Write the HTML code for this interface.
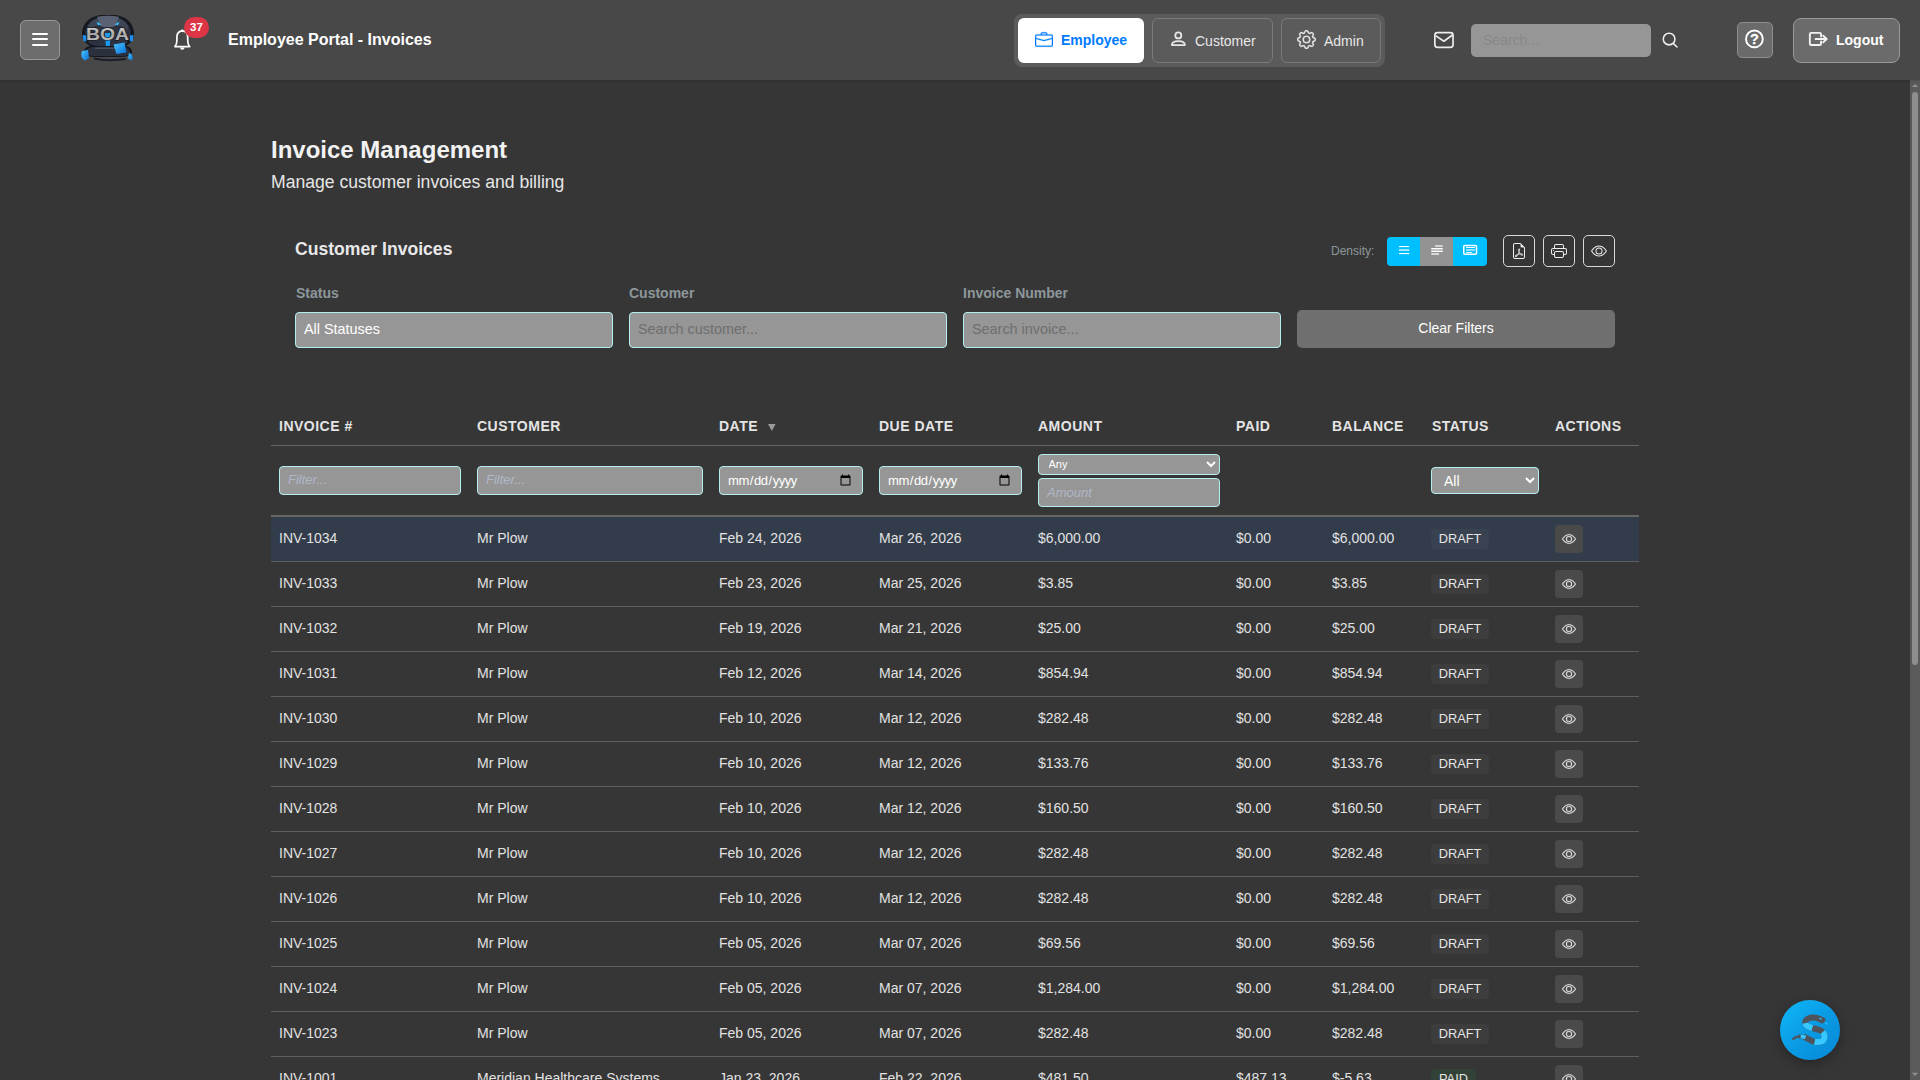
<!DOCTYPE html>
<html><head><meta charset="utf-8"><title>Employee Portal - Invoices</title>
<style>
*{box-sizing:border-box}
html,body{margin:0;padding:0}
body{width:1920px;height:1080px;overflow:hidden;position:relative;background:#363636;font-family:"Liberation Sans",sans-serif;color:#e0e0e0}
.abs{position:absolute}
svg{display:block}
/* header */
#hdr{position:absolute;left:0;top:0;width:1920px;height:80px;background:#484848;box-shadow:0 1px 3px rgba(0,0,0,.15);z-index:5}
.hb{position:absolute;left:20px;top:20px;width:40px;height:40px;background:#6d6d6d;border:1px solid #999;border-radius:6px}
.hb i{position:absolute;left:11px;width:16px;height:2px;background:#fff;border-radius:1px}
.badge37{position:absolute;left:184px;top:17px;width:25px;height:21px;border-radius:11px;background:#dc3545;color:#fff;font-size:11.5px;font-weight:700;text-align:center;line-height:21px}
.ptitle{position:absolute;left:228px;top:31px;font-size:16px;font-weight:700;color:#fff;line-height:18px;white-space:nowrap}
.navgrp{position:absolute;left:1014px;top:14px;width:371px;height:53px;background:#5b5b5b;border-radius:8px}
.nb{position:absolute;top:4px;height:45px;border-radius:6px;font-size:14px;white-space:nowrap}
.nb.act{left:4px;width:126px;background:#fff;color:#007bff;font-weight:700}
.nb.cu{left:138px;width:121px;border:1px solid #7a7a7a;color:#e8e8e8}
.nb.ad{left:267px;width:100px;border:1px solid #7a7a7a;color:#e8e8e8}
.nb svg{position:absolute}
.nb span{position:absolute;top:14px;line-height:16px}
.srch{position:absolute;left:1471px;top:24px;width:180px;height:33px;background:#969696;border-radius:5px;color:#888;font-size:14px;line-height:33px;padding-left:12px}
.helpb{position:absolute;left:1737px;top:22px;width:36px;height:36px;background:#6a6a6a;border:1px solid #8e8e8e;border-radius:5px}
.logout{position:absolute;left:1793px;top:18px;width:107px;height:45px;background:#6b6b6b;border:1px solid #9a9a9a;border-radius:8px;color:#fff;font-weight:700;font-size:14px}
/* scrollbar */
#sbar{position:absolute;left:1910px;top:80px;width:10px;height:1000px;background:#5a5a5a}
#sthumb{position:absolute;left:2px;top:12px;width:6px;height:573px;background:#8e8e8e;border-radius:3px}
/* content */
.h1{position:absolute;left:271px;top:136px;font-size:24px;font-weight:700;color:#f2f2f2;white-space:nowrap;line-height:28px}
.sub{position:absolute;left:271px;top:172px;font-size:17.6px;color:#e6e6e6;white-space:nowrap;line-height:20px}
.h2{position:absolute;left:295px;top:239px;font-size:17.6px;font-weight:700;color:#e8e8e8;white-space:nowrap;line-height:20px}
.density{position:absolute;left:1331px;top:244px;font-size:12px;color:#8d979b;line-height:14px}
.dgrp{position:absolute;left:1387px;top:237px;width:100px;height:29px;border-radius:4px;overflow:hidden;background:#00bfff}
.dgrp .mid{position:absolute;left:33px;top:0;width:33px;height:29px;background:#939393}
.ib{position:absolute;top:235px;width:32px;height:32px;border:1.3px solid #d8d8d8;border-radius:5px;color:#eee}
.ib svg{position:absolute;left:7px;top:7px}
.lbl{position:absolute;top:284.5px;font-size:14px;font-weight:700;color:#8d979b;line-height:16px;white-space:nowrap}
.inp{position:absolute;top:312px;width:318px;height:36px;background:#969696;border:1px solid #b4eef0;border-radius:4px;font-size:14.4px;line-height:32px;padding-left:8px;white-space:nowrap}
.inp.ph{color:#6e6e6e}
.inp.val{color:#fff}
.clr{position:absolute;left:1297px;top:310px;width:318px;height:38px;background:#6f6f6f;border-radius:5px;color:#fff;font-size:14px;text-align:center;line-height:37px}
/* table */
.ctl{position:absolute;margin:0;font-family:"Liberation Sans",sans-serif;background:#969696;border:1px solid #b4eef0;border-radius:4px;color:#fff;box-sizing:border-box;outline:none}
.ctl.dt{font-size:13px;letter-spacing:-0.45px;padding:0 8px 0 7px}
.ctl.am{font-size:13px;font-style:italic;padding:0 0 0 8px}
.ctl.am::placeholder{color:#b0b8c8}

.th{position:absolute;top:418px;font-size:14px;font-weight:700;letter-spacing:.5px;color:#e4e4e4;line-height:16px;white-space:nowrap}
.hline{position:absolute;left:271px;top:445px;width:1368px;height:1px;background:#666}
.hline2{position:absolute;left:271px;top:515px;width:1368px;height:2px;background:#666}
.fi{position:absolute;height:29px;background:#969696;border:1px solid #b4eef0;border-radius:4px;font-size:14px;white-space:nowrap;overflow:hidden}
.fi.ph{color:#b0b8c8;font-style:italic;font-size:13px;padding-left:8px;line-height:25px}
.row{position:absolute;left:271px;width:1368px;height:45px;border-bottom:1px solid #5f5f5f}
.row.sel{background:#323c4a}
.cell{position:absolute;top:13px;font-size:14px;line-height:16px;color:#e2e2e2;white-space:nowrap}
.badge{position:absolute;left:1160px;top:12px;width:58px;height:20px;border-radius:4px;background:rgba(255,255,255,.035);font-size:12.8px;color:#e6e6e6;text-align:center;line-height:20px}
.badge.paid{background:rgba(40,140,70,.15);width:45px}
.eyebtn{position:absolute;left:1284px;top:8px;width:28px;height:28px;border-radius:4px;background:#4a4a4a;color:#e6e6e6}
.eyebtn svg{position:absolute;left:7px;top:7px}
.fab{position:absolute;left:1780px;top:1000px;width:60px;height:60px;border-radius:50%;background:linear-gradient(135deg,#0fb9f8 0%,#0a9be4 50%,#0887d6 100%);box-shadow:0 4px 12px rgba(0,0,0,.3)}
</style></head>
<body>
<div id="hdr">
  <div class="hb"><i style="top:11.5px"></i><i style="top:17px"></i><i style="top:22.5px"></i></div>
  <!-- logo -->
  <svg class="abs" style="left:76px;top:10px" width="64" height="56" viewBox="76 10 64 56">
    <defs><linearGradient id="blu" x1="0" y1="0" x2="1" y2="1"><stop offset="0" stop-color="#49c6ff"/><stop offset="1" stop-color="#0a6fd8"/></linearGradient>
    <linearGradient id="slv" x1="0" y1="0" x2="0" y2="1"><stop offset="0" stop-color="#dcdcdc"/><stop offset="0.5" stop-color="#a8a8a8"/><stop offset="1" stop-color="#c8c8c8"/></linearGradient></defs>
    <path d="M108 57 Q84 57 84 52 Q84 47 90 46 Q81 41 82 32 Q84 18 100 15 L116 15 Q132 18 134 32 Q135 41 126 46 Q132 47 132 52 Q132 57 108 57Z" fill="#141820"/>
    <path d="M90 44 Q84 38 85.5 30 Q88 20 100 17 L116 17 Q128 20 130.5 30 Q132 38 126 44 Q118 47 108 47 Q98 47 90 44Z" fill="#2c3242"/>
    <path d="M88 26 Q92 19 100 17.5 L104 24 Q96 25 88 30Z" fill="#3d4456"/>
    <path d="M128 26 Q124 19 116 17.5 L112 24 Q120 25 128 30Z" fill="#3d4456"/>
    <path d="M97 16.8 Q108 14.5 119 16.8 L115.5 26 Q108 28.5 100.5 26 Z" fill="#5a6173"/>
    <path d="M96.5 21.5 L101.5 24.6 L98 25.2 Z" fill="#36c0ff"/>
    <path d="M119.5 21.5 L114.5 24.6 L118 25.2 Z" fill="#36c0ff"/>
    <path d="M82.6 35 L86.4 35.5 L86.4 41.5 L83.5 41 Z" fill="#1e8ff5"/>
    <path d="M133.4 35 L130 35.5 L130 41.5 L132.8 41 Z" fill="#1e8ff5"/>
    <path d="M105 33 L110.5 33 L109.8 46 L105.8 46 Z" fill="#1a9cf0"/>
    <path d="M86 52 Q86 46.5 95 46.5 L121 46.5 Q130 46.5 130 52 Q130 56.5 122 56.5 L94 56.5 Q86 56.5 86 52 Z" fill="#2b303d" stroke="#10131a" stroke-width=".8"/>
    <path d="M95 48.2 L118 48.2" stroke="#4c5365" stroke-width="1.4"/>
    <path d="M113.5 44.5 L124.5 42.5 L126.5 52.5 L116.5 54 Z" fill="url(#blu)"/>
    <path d="M82 51 Q79.5 57.5 85 60.5 L89 58 L88 50 Z" fill="url(#blu)"/>
    <path d="M129 52.5 Q134.5 56 132 60.5 L128 58.5 Z" fill="url(#blu)"/>
    <path d="M94 58.5 Q108 61.5 126 59" stroke="#1a1e28" stroke-width="2" fill="none"/>
    <text x="107.6" y="40.4" text-anchor="middle" font-family="Liberation Sans" font-weight="700" font-size="16.5" textLength="43" lengthAdjust="spacingAndGlyphs" fill="url(#slv)" stroke="#1c1c1c" stroke-width="1.3" paint-order="stroke">BOA</text>
  </svg>
  <svg class="abs" style="left:170px;top:27px" width="24" height="26" viewBox="0 0 24 26" fill="none" stroke="#fff" stroke-width="1.7" stroke-linejoin="round"><path d="M4.9 19.6 Q6.9 17.6 6.9 13.3 L6.9 9.8 Q7.1 4.1 12.3 3.8 Q17.5 4.1 17.7 9.8 L17.7 13.3 Q17.7 17.6 19.7 19.6 Z"/><circle cx="12.3" cy="3.2" r=".9" fill="#fff" stroke="none"/><path d="M10 20.4 A2.3 2.3 0 0 0 14.6 20.4 Z" fill="#fff" stroke="none"/></svg>
  <div class="badge37">37</div>
  <div class="ptitle">Employee Portal - Invoices</div>

  <div class="navgrp">
    <div class="nb act">
      <svg style="left:17px;top:12.5px" width="18" height="18" viewBox="0 0 16 16" fill="currentColor" stroke="currentColor" stroke-width=".2"><path d="M6.5 1A1.5 1.5 0 0 0 5 2.5V3H1.5A1.5 1.5 0 0 0 0 4.5v8A1.5 1.5 0 0 0 1.5 14h13a1.5 1.5 0 0 0 1.5-1.5v-8A1.5 1.5 0 0 0 14.5 3H11v-.5A1.5 1.5 0 0 0 9.5 1zm0 1h3a.5.5 0 0 1 .5.5V3H6v-.5a.5.5 0 0 1 .5-.5m1.886 6.914L15 7.151V12.5a.5.5 0 0 1-.5.5h-13a.5.5 0 0 1-.5-.5V7.15l6.614 1.764a1.5 1.5 0 0 0 .772 0M1.5 4h13a.5.5 0 0 1 .5.5v1.616L8.129 7.948a.5.5 0 0 1-.258 0L1 6.116V4.5a.5.5 0 0 1 .5-.5"/></svg>
      <span style="left:43px">Employee</span>
    </div>
    <div class="nb cu">
      <svg style="left:14px;top:9px" width="24" height="24" viewBox="0 0 24 24" fill="none" stroke="#e6e6e6" stroke-width="1.8"><circle cx="11.3" cy="7.4" r="3"/><path d="M4.9 17.1 C4.9 14.5 7.5 13.1 11.4 13.1 C15.3 13.1 17.9 14.5 17.9 17.1 Z" stroke-linejoin="round"/></svg>
      <span style="left:42px;top:13.5px">Customer</span>
    </div>
    <div class="nb ad">
      <svg style="left:15px;top:11px" width="19" height="19" viewBox="0 0 16 16" fill="currentColor" stroke="currentColor" stroke-width=".3"><path d="M8 4.754a3.246 3.246 0 1 0 0 6.492 3.246 3.246 0 0 0 0-6.492M5.754 8a2.246 2.246 0 1 1 4.492 0 2.246 2.246 0 0 1-4.492 0"/><path d="M9.796 1.343c-.527-1.79-3.065-1.790-3.592 0l-.094.319a.873.873 0 0 1-1.255.52l-.292-.16c-1.64-.892-3.433.902-2.540 2.541l.159.292a.873.873 0 0 1-.52 1.255l-.319.094c-1.790.527-1.790 3.065 0 3.592l.319.094a.873.873 0 0 1 .52 1.255l-.16.292c-.892 1.640.901 3.434 2.541 2.540l.292-.159a.873.873 0 0 1 1.255.52l.094.319c.527 1.790 3.065 1.790 3.592 0l.094-.319a.873.873 0 0 1 1.255-.52l.292.16c1.640.893 3.434-.902 2.540-2.541l-.159-.292a.873.873 0 0 1 .52-1.255l.319-.094c1.790-.527 1.790-3.065 0-3.592l-.319-.094a.873.873 0 0 1-.52-1.255l.16-.292c.893-1.640-.902-3.433-2.541-2.540l-.292.159a.873.873 0 0 1-1.255-.52zm-2.633.283c.246-.835 1.428-.835 1.674 0l.094.319a1.873 1.873 0 0 0 2.693 1.115l.291-.16c.764-.415 1.6.42 1.184 1.185l-.159.292a1.873 1.873 0 0 0 1.116 2.692l.318.094c.835.246.835 1.428 0 1.674l-.319.094a1.873 1.873 0 0 0-1.115 2.693l.16.291c.415.764-.42 1.6-1.185 1.184l-.291-.159a1.873 1.873 0 0 0-2.693 1.116l-.094.318c-.246.835-1.428.835-1.674 0l-.094-.319a1.873 1.873 0 0 0-2.692-1.115l-.292.16c-.764.415-1.6-.42-1.184-1.185l.159-.291A1.873 1.873 0 0 0 1.945 8.93l-.319-.094c-.835-.246-.835-1.428 0-1.674l.319-.094A1.873 1.873 0 0 0 3.060 4.377l-.16-.292c-.415-.764.42-1.6 1.185-1.184l.292.159a1.873 1.873 0 0 0 2.692-1.115z"/></svg>
      <span style="left:42px;top:13.5px">Admin</span>
    </div>
  </div>

  <svg class="abs" style="left:1430px;top:27px" width="28" height="26" viewBox="0 0 28 26" fill="none" stroke="#ececec" stroke-width="1.7" stroke-linejoin="round"><rect x="4.85" y="5.65" width="18.2" height="14.8" rx="2.6"/><path d="M5.6 8.6 L13.9 14.2 L22.8 7.8"/></svg>
  <div class="srch">Search...</div>
  <svg class="abs" style="left:1658px;top:28px" width="24" height="24" viewBox="0 0 24 24" fill="none" stroke="#ececec" stroke-width="1.55" stroke-linecap="round"><circle cx="11.1" cy="11" r="5.85"/><path d="M15.5 15.6 L19 19"/></svg>
  <div class="helpb"><svg style="position:absolute;left:0;top:0" width="34" height="34" viewBox="0 0 34 34"><circle cx="16.4" cy="15.9" r="8.4" fill="none" stroke="#fff" stroke-width="1.9"/><text x="16.5" y="21.1" text-anchor="middle" font-family="Liberation Sans" font-weight="700" font-size="14.5" fill="#fff" stroke="#fff" stroke-width=".3">?</text></svg></div>
  <div class="logout">
    <svg style="position:absolute;left:0;top:0" width="40" height="40" viewBox="0 0 40 40" fill="none" stroke="#f2f2f2" stroke-width="1.9" stroke-linecap="round" stroke-linejoin="round"><path d="M27.05 17.6 L27.05 15.2 Q27.05 13.85 25.7 13.85 L17.2 13.85 Q15.85 13.85 15.85 15.2 L15.85 24.7 Q15.85 26.05 17.2 26.05 L25.7 26.05 Q27.05 26.05 27.05 24.7 L27.05 22.4"/><path d="M21.6 20 L32.6 20 M29.2 16.7 L32.7 20 L29.2 23.3"/></svg>
    <span style="position:absolute;left:42px;top:13px;line-height:16px">Logout</span>
  </div>
</div>

<div id="sbar"><div id="sthumb"></div>
<svg style="position:absolute;left:0;top:0" width="10" height="1000" viewBox="1910 80 10 1000"><path d="M1911.9 87 L1918.1 87 L1915 83.9 Z" fill="#909090"/><path d="M1911.9 1072.8 L1918.1 1072.8 L1915 1076 Z" fill="#909090"/></svg></div>

<div class="h1">Invoice Management</div>
<div class="sub">Manage customer invoices and billing</div>

<div class="h2">Customer Invoices</div>
<div class="density">Density:</div>
<div class="dgrp"><div class="mid"></div></div>
<svg class="abs" style="left:1387px;top:237px" width="100" height="29" viewBox="1387 237 100 29">
  <g fill="#fff">
    <rect x="1399" y="246" width="10.25" height="1.1"/>
    <rect x="1399" y="249.3" width="10.25" height="1.5" fill="#d6f3ff"/>
    <rect x="1399" y="253" width="10.25" height="1.1"/>
    <rect x="1435" y="245.3" width="7.75" height="1.4" fill="#f0f0f0"/>
    <rect x="1431.25" y="248" width="11.5" height="1.1"/>
    <rect x="1431.25" y="249.1" width="11.5" height="1.8" fill="#c4c4c4"/>
    <rect x="1431.25" y="250.9" width="11.5" height="1.1"/>
    <rect x="1431.25" y="253.2" width="7.75" height="1.6" fill="#eaeaea"/>
    <rect x="1466" y="247" width="8.75" height="1" />
    <rect x="1466" y="249.25" width="8.75" height="1.5" fill="#c8f0ff"/>
    <rect x="1466" y="252" width="6" height=".9"/>
  </g>
  <rect x="1463.75" y="245.5" width="12.75" height="8.75" rx="1" fill="none" stroke="#fff" stroke-width="1.5"/>
</svg>
<div class="ib" style="left:1503px"><svg width="16" height="16" viewBox="0 0 16 16" fill="currentColor"><path d="M14 14V4.5L9.5 0H4a2 2 0 0 0-2 2v12a2 2 0 0 0 2 2h8a2 2 0 0 0 2-2M9.5 3A1.5 1.5 0 0 0 11 4.5h2V14a1 1 0 0 1-1 1H4a1 1 0 0 1-1-1V2a1 1 0 0 1 1-1h5.5z"/><path d="M4.603 14.087a.8.8 0 0 1-.438-.42c-.195-.388-.13-.776.08-1.102.198-.307.526-.568.897-.787a7.7 7.7 0 0 1 1.482-.645 20 20 0 0 0 1.062-2.227 7.3 7.3 0 0 1-.43-1.295c-.086-.4-.119-.796-.046-1.136.075-.354.274-.672.65-.823.192-.077.4-.12.602-.077a.7.7 0 0 1 .477.365c.088.164.12.356.127.538.007.188-.012.396-.047.614-.084.51-.27 1.134-.52 1.794a11 11 0 0 0 .98 1.686 5.8 5.8 0 0 1 1.334.05c.364.066.734.195.96.465.12.144.193.32.2.518.007.192-.047.382-.138.563a1.040 1.040 0 0 1-.354.416.86.86 0 0 1-.51.138c-.331-.014-.654-.196-.933-.417a5.7 5.7 0 0 1-.911-.95 11.700 11.700 0 0 0-1.997.406 11.300 11.300 0 0 1-1.020 1.510c-.292.35-.609.656-.927.787a.8.8 0 0 1-.58.029m1.379-1.901q-.25.115-.459.238c-.328.194-.541.383-.647.547-.094.145-.096.25-.04.361q.016.032.026.044l.035-.012c.137-.056.355-.235.635-.572a8 8 0 0 0 .45-.606m1.64-1.33a13 13 0 0 1 1.010-.193 12 12 0 0 1-.51-.858 21 21 0 0 1-.5 1.050zm2.446.45q.226.245.435.41c.24.19.407.253.498.256a.1.1 0 0 0 .07-.015.3.3 0 0 0 .094-.125.44.44 0 0 0 .059-.2.1.1 0 0 0-.026-.063c-.052-.062-.2-.152-.518-.209a4 4 0 0 0-.612-.053zM8.078 7.8a7 7 0 0 0 .2-.828q.046-.282.038-.465a.6.6 0 0 0-.032-.198.5.5 0 0 0-.145.04c-.087.035-.158.106-.196.283-.04.192-.03.469.046.822q.036.167.09.346z"/></svg></div>
<div class="ib" style="left:1543px"><svg width="16" height="16" viewBox="0 0 16 16" fill="currentColor"><path d="M2.5 8a.5.5 0 1 0 0-1 .5.5 0 0 0 0 1"/><path d="M5 1a2 2 0 0 0-2 2v2H2a2 2 0 0 0-2 2v3a2 2 0 0 0 2 2h1v1a2 2 0 0 0 2 2h6a2 2 0 0 0 2-2v-1h1a2 2 0 0 0 2-2V7a2 2 0 0 0-2-2h-1V3a2 2 0 0 0-2-2zM4 3a1 1 0 0 1 1-1h6a1 1 0 0 1 1 1v2H4zm1 5a2 2 0 0 0-2 2v1H2a1 1 0 0 1-1-1V7a1 1 0 0 1 1-1h12a1 1 0 0 1 1 1v3a1 1 0 0 1-1 1h-1v-1a2 2 0 0 0-2-2zm7 2v3a1 1 0 0 1-1 1H5a1 1 0 0 1-1-1v-3a1 1 0 0 1 1-1h6a1 1 0 0 1 1 1"/></svg></div>
<div class="ib" style="left:1583px"><svg width="16" height="16" viewBox="0 0 16 16" fill="currentColor"><path d="M16 8s-3-5.5-8-5.5S0 8 0 8s3 5.5 8 5.5S16 8 16 8M1.173 8a13 13 0 0 1 1.66-2.043C4.12 4.668 5.88 3.5 8 3.5s3.879 1.168 5.168 2.457A13 13 0 0 1 14.828 8q-.086.13-.195.288c-.335.48-.83 1.12-1.465 1.755C11.879 11.332 10.119 12.5 8 12.5s-3.879-1.168-5.168-2.457A13 13 0 0 1 1.172 8z"/><path d="M8 5.5a2.5 2.5 0 1 0 0 5 2.5 2.5 0 0 0 0-5M4.5 8a3.5 3.5 0 1 1 7 0 3.5 3.5 0 0 1-7 0"/></svg></div>

<div class="lbl" style="left:296px">Status</div>
<div class="lbl" style="left:629px">Customer</div>
<div class="lbl" style="left:963px">Invoice Number</div>
<div class="inp val" style="left:295px">All Statuses</div>
<div class="inp ph" style="left:629px">Search customer...</div>
<div class="inp ph" style="left:963px">Search invoice...</div>
<div class="clr">Clear Filters</div>

<div class="th" style="left:279px">INVOICE #</div>
<div class="th" style="left:477px">CUSTOMER</div>
<div class="th" style="left:719px">DATE</div>
<svg class="abs" style="left:767px;top:423px" width="10" height="9" viewBox="0 0 10 9"><path d="M1 1 L8.6 1 L4.8 8 Z" fill="#9a9a9a"/></svg>
<div class="th" style="left:879px">DUE DATE</div>
<div class="th" style="left:1038px">AMOUNT</div>
<div class="th" style="left:1236px">PAID</div>
<div class="th" style="left:1332px">BALANCE</div>
<div class="th" style="left:1432px">STATUS</div>
<div class="th" style="left:1555px">ACTIONS</div>
<div class="hline"></div>

<div class="fi ph" style="left:279px;top:466px;width:182px">Filter...</div>
<div class="fi ph" style="left:477px;top:466px;width:226px">Filter...</div>
<input type="date" class="ctl dt" style="left:719px;top:466px;width:144px;height:29px">
<input type="date" class="ctl dt" style="left:879px;top:466px;width:143px;height:29px">
<select class="ctl" style="left:1038px;top:454px;width:182px;height:21px;font-size:11px;padding:0 0 2px 5.5px"><option>Any</option></select>
<input type="text" class="ctl am" placeholder="Amount" style="left:1038px;top:478px;width:182px;height:29px">
<select class="ctl" style="left:1431px;top:467px;width:108px;height:27px;font-size:14px;padding:0 0 0 8px"><option>All</option></select>
<div class="hline2"></div>

<div class="row sel" style="top:517px">
<span class="cell" style="left:8px">INV-1034</span>
<span class="cell" style="left:206px">Mr Plow</span>
<span class="cell" style="left:448px">Feb 24, 2026</span>
<span class="cell" style="left:608px">Mar 26, 2026</span>
<span class="cell" style="left:767px">$6,000.00</span>
<span class="cell" style="left:965px">$0.00</span>
<span class="cell" style="left:1061px">$6,000.00</span>
<span class="badge">DRAFT</span>
<span class="eyebtn"><svg width="14" height="14" viewBox="0 0 16 16" fill="currentColor" stroke="currentColor" stroke-width=".25"><path d="M16 8s-3-5.5-8-5.5S0 8 0 8s3 5.5 8 5.5S16 8 16 8M1.173 8a13 13 0 0 1 1.66-2.043C4.12 4.668 5.88 3.5 8 3.5s3.879 1.168 5.168 2.457A13 13 0 0 1 14.828 8q-.086.13-.195.288c-.335.48-.83 1.12-1.465 1.755C11.879 11.332 10.119 12.5 8 12.5s-3.879-1.168-5.168-2.457A13 13 0 0 1 1.172 8z"/><path d="M8 5.5a2.5 2.5 0 1 0 0 5 2.5 2.5 0 0 0 0-5M4.5 8a3.5 3.5 0 1 1 7 0 3.5 3.5 0 0 1-7 0"/></svg></span>
</div>
<div class="row" style="top:562px">
<span class="cell" style="left:8px">INV-1033</span>
<span class="cell" style="left:206px">Mr Plow</span>
<span class="cell" style="left:448px">Feb 23, 2026</span>
<span class="cell" style="left:608px">Mar 25, 2026</span>
<span class="cell" style="left:767px">$3.85</span>
<span class="cell" style="left:965px">$0.00</span>
<span class="cell" style="left:1061px">$3.85</span>
<span class="badge">DRAFT</span>
<span class="eyebtn"><svg width="14" height="14" viewBox="0 0 16 16" fill="currentColor" stroke="currentColor" stroke-width=".25"><path d="M16 8s-3-5.5-8-5.5S0 8 0 8s3 5.5 8 5.5S16 8 16 8M1.173 8a13 13 0 0 1 1.66-2.043C4.12 4.668 5.88 3.5 8 3.5s3.879 1.168 5.168 2.457A13 13 0 0 1 14.828 8q-.086.13-.195.288c-.335.48-.83 1.12-1.465 1.755C11.879 11.332 10.119 12.5 8 12.5s-3.879-1.168-5.168-2.457A13 13 0 0 1 1.172 8z"/><path d="M8 5.5a2.5 2.5 0 1 0 0 5 2.5 2.5 0 0 0 0-5M4.5 8a3.5 3.5 0 1 1 7 0 3.5 3.5 0 0 1-7 0"/></svg></span>
</div>
<div class="row" style="top:607px">
<span class="cell" style="left:8px">INV-1032</span>
<span class="cell" style="left:206px">Mr Plow</span>
<span class="cell" style="left:448px">Feb 19, 2026</span>
<span class="cell" style="left:608px">Mar 21, 2026</span>
<span class="cell" style="left:767px">$25.00</span>
<span class="cell" style="left:965px">$0.00</span>
<span class="cell" style="left:1061px">$25.00</span>
<span class="badge">DRAFT</span>
<span class="eyebtn"><svg width="14" height="14" viewBox="0 0 16 16" fill="currentColor" stroke="currentColor" stroke-width=".25"><path d="M16 8s-3-5.5-8-5.5S0 8 0 8s3 5.5 8 5.5S16 8 16 8M1.173 8a13 13 0 0 1 1.66-2.043C4.12 4.668 5.88 3.5 8 3.5s3.879 1.168 5.168 2.457A13 13 0 0 1 14.828 8q-.086.13-.195.288c-.335.48-.83 1.12-1.465 1.755C11.879 11.332 10.119 12.5 8 12.5s-3.879-1.168-5.168-2.457A13 13 0 0 1 1.172 8z"/><path d="M8 5.5a2.5 2.5 0 1 0 0 5 2.5 2.5 0 0 0 0-5M4.5 8a3.5 3.5 0 1 1 7 0 3.5 3.5 0 0 1-7 0"/></svg></span>
</div>
<div class="row" style="top:652px">
<span class="cell" style="left:8px">INV-1031</span>
<span class="cell" style="left:206px">Mr Plow</span>
<span class="cell" style="left:448px">Feb 12, 2026</span>
<span class="cell" style="left:608px">Mar 14, 2026</span>
<span class="cell" style="left:767px">$854.94</span>
<span class="cell" style="left:965px">$0.00</span>
<span class="cell" style="left:1061px">$854.94</span>
<span class="badge">DRAFT</span>
<span class="eyebtn"><svg width="14" height="14" viewBox="0 0 16 16" fill="currentColor" stroke="currentColor" stroke-width=".25"><path d="M16 8s-3-5.5-8-5.5S0 8 0 8s3 5.5 8 5.5S16 8 16 8M1.173 8a13 13 0 0 1 1.66-2.043C4.12 4.668 5.88 3.5 8 3.5s3.879 1.168 5.168 2.457A13 13 0 0 1 14.828 8q-.086.13-.195.288c-.335.48-.83 1.12-1.465 1.755C11.879 11.332 10.119 12.5 8 12.5s-3.879-1.168-5.168-2.457A13 13 0 0 1 1.172 8z"/><path d="M8 5.5a2.5 2.5 0 1 0 0 5 2.5 2.5 0 0 0 0-5M4.5 8a3.5 3.5 0 1 1 7 0 3.5 3.5 0 0 1-7 0"/></svg></span>
</div>
<div class="row" style="top:697px">
<span class="cell" style="left:8px">INV-1030</span>
<span class="cell" style="left:206px">Mr Plow</span>
<span class="cell" style="left:448px">Feb 10, 2026</span>
<span class="cell" style="left:608px">Mar 12, 2026</span>
<span class="cell" style="left:767px">$282.48</span>
<span class="cell" style="left:965px">$0.00</span>
<span class="cell" style="left:1061px">$282.48</span>
<span class="badge">DRAFT</span>
<span class="eyebtn"><svg width="14" height="14" viewBox="0 0 16 16" fill="currentColor" stroke="currentColor" stroke-width=".25"><path d="M16 8s-3-5.5-8-5.5S0 8 0 8s3 5.5 8 5.5S16 8 16 8M1.173 8a13 13 0 0 1 1.66-2.043C4.12 4.668 5.88 3.5 8 3.5s3.879 1.168 5.168 2.457A13 13 0 0 1 14.828 8q-.086.13-.195.288c-.335.48-.83 1.12-1.465 1.755C11.879 11.332 10.119 12.5 8 12.5s-3.879-1.168-5.168-2.457A13 13 0 0 1 1.172 8z"/><path d="M8 5.5a2.5 2.5 0 1 0 0 5 2.5 2.5 0 0 0 0-5M4.5 8a3.5 3.5 0 1 1 7 0 3.5 3.5 0 0 1-7 0"/></svg></span>
</div>
<div class="row" style="top:742px">
<span class="cell" style="left:8px">INV-1029</span>
<span class="cell" style="left:206px">Mr Plow</span>
<span class="cell" style="left:448px">Feb 10, 2026</span>
<span class="cell" style="left:608px">Mar 12, 2026</span>
<span class="cell" style="left:767px">$133.76</span>
<span class="cell" style="left:965px">$0.00</span>
<span class="cell" style="left:1061px">$133.76</span>
<span class="badge">DRAFT</span>
<span class="eyebtn"><svg width="14" height="14" viewBox="0 0 16 16" fill="currentColor" stroke="currentColor" stroke-width=".25"><path d="M16 8s-3-5.5-8-5.5S0 8 0 8s3 5.5 8 5.5S16 8 16 8M1.173 8a13 13 0 0 1 1.66-2.043C4.12 4.668 5.88 3.5 8 3.5s3.879 1.168 5.168 2.457A13 13 0 0 1 14.828 8q-.086.13-.195.288c-.335.48-.83 1.12-1.465 1.755C11.879 11.332 10.119 12.5 8 12.5s-3.879-1.168-5.168-2.457A13 13 0 0 1 1.172 8z"/><path d="M8 5.5a2.5 2.5 0 1 0 0 5 2.5 2.5 0 0 0 0-5M4.5 8a3.5 3.5 0 1 1 7 0 3.5 3.5 0 0 1-7 0"/></svg></span>
</div>
<div class="row" style="top:787px">
<span class="cell" style="left:8px">INV-1028</span>
<span class="cell" style="left:206px">Mr Plow</span>
<span class="cell" style="left:448px">Feb 10, 2026</span>
<span class="cell" style="left:608px">Mar 12, 2026</span>
<span class="cell" style="left:767px">$160.50</span>
<span class="cell" style="left:965px">$0.00</span>
<span class="cell" style="left:1061px">$160.50</span>
<span class="badge">DRAFT</span>
<span class="eyebtn"><svg width="14" height="14" viewBox="0 0 16 16" fill="currentColor" stroke="currentColor" stroke-width=".25"><path d="M16 8s-3-5.5-8-5.5S0 8 0 8s3 5.5 8 5.5S16 8 16 8M1.173 8a13 13 0 0 1 1.66-2.043C4.12 4.668 5.88 3.5 8 3.5s3.879 1.168 5.168 2.457A13 13 0 0 1 14.828 8q-.086.13-.195.288c-.335.48-.83 1.12-1.465 1.755C11.879 11.332 10.119 12.5 8 12.5s-3.879-1.168-5.168-2.457A13 13 0 0 1 1.172 8z"/><path d="M8 5.5a2.5 2.5 0 1 0 0 5 2.5 2.5 0 0 0 0-5M4.5 8a3.5 3.5 0 1 1 7 0 3.5 3.5 0 0 1-7 0"/></svg></span>
</div>
<div class="row" style="top:832px">
<span class="cell" style="left:8px">INV-1027</span>
<span class="cell" style="left:206px">Mr Plow</span>
<span class="cell" style="left:448px">Feb 10, 2026</span>
<span class="cell" style="left:608px">Mar 12, 2026</span>
<span class="cell" style="left:767px">$282.48</span>
<span class="cell" style="left:965px">$0.00</span>
<span class="cell" style="left:1061px">$282.48</span>
<span class="badge">DRAFT</span>
<span class="eyebtn"><svg width="14" height="14" viewBox="0 0 16 16" fill="currentColor" stroke="currentColor" stroke-width=".25"><path d="M16 8s-3-5.5-8-5.5S0 8 0 8s3 5.5 8 5.5S16 8 16 8M1.173 8a13 13 0 0 1 1.66-2.043C4.12 4.668 5.88 3.5 8 3.5s3.879 1.168 5.168 2.457A13 13 0 0 1 14.828 8q-.086.13-.195.288c-.335.48-.83 1.12-1.465 1.755C11.879 11.332 10.119 12.5 8 12.5s-3.879-1.168-5.168-2.457A13 13 0 0 1 1.172 8z"/><path d="M8 5.5a2.5 2.5 0 1 0 0 5 2.5 2.5 0 0 0 0-5M4.5 8a3.5 3.5 0 1 1 7 0 3.5 3.5 0 0 1-7 0"/></svg></span>
</div>
<div class="row" style="top:877px">
<span class="cell" style="left:8px">INV-1026</span>
<span class="cell" style="left:206px">Mr Plow</span>
<span class="cell" style="left:448px">Feb 10, 2026</span>
<span class="cell" style="left:608px">Mar 12, 2026</span>
<span class="cell" style="left:767px">$282.48</span>
<span class="cell" style="left:965px">$0.00</span>
<span class="cell" style="left:1061px">$282.48</span>
<span class="badge">DRAFT</span>
<span class="eyebtn"><svg width="14" height="14" viewBox="0 0 16 16" fill="currentColor" stroke="currentColor" stroke-width=".25"><path d="M16 8s-3-5.5-8-5.5S0 8 0 8s3 5.5 8 5.5S16 8 16 8M1.173 8a13 13 0 0 1 1.66-2.043C4.12 4.668 5.88 3.5 8 3.5s3.879 1.168 5.168 2.457A13 13 0 0 1 14.828 8q-.086.13-.195.288c-.335.48-.83 1.12-1.465 1.755C11.879 11.332 10.119 12.5 8 12.5s-3.879-1.168-5.168-2.457A13 13 0 0 1 1.172 8z"/><path d="M8 5.5a2.5 2.5 0 1 0 0 5 2.5 2.5 0 0 0 0-5M4.5 8a3.5 3.5 0 1 1 7 0 3.5 3.5 0 0 1-7 0"/></svg></span>
</div>
<div class="row" style="top:922px">
<span class="cell" style="left:8px">INV-1025</span>
<span class="cell" style="left:206px">Mr Plow</span>
<span class="cell" style="left:448px">Feb 05, 2026</span>
<span class="cell" style="left:608px">Mar 07, 2026</span>
<span class="cell" style="left:767px">$69.56</span>
<span class="cell" style="left:965px">$0.00</span>
<span class="cell" style="left:1061px">$69.56</span>
<span class="badge">DRAFT</span>
<span class="eyebtn"><svg width="14" height="14" viewBox="0 0 16 16" fill="currentColor" stroke="currentColor" stroke-width=".25"><path d="M16 8s-3-5.5-8-5.5S0 8 0 8s3 5.5 8 5.5S16 8 16 8M1.173 8a13 13 0 0 1 1.66-2.043C4.12 4.668 5.88 3.5 8 3.5s3.879 1.168 5.168 2.457A13 13 0 0 1 14.828 8q-.086.13-.195.288c-.335.48-.83 1.12-1.465 1.755C11.879 11.332 10.119 12.5 8 12.5s-3.879-1.168-5.168-2.457A13 13 0 0 1 1.172 8z"/><path d="M8 5.5a2.5 2.5 0 1 0 0 5 2.5 2.5 0 0 0 0-5M4.5 8a3.5 3.5 0 1 1 7 0 3.5 3.5 0 0 1-7 0"/></svg></span>
</div>
<div class="row" style="top:967px">
<span class="cell" style="left:8px">INV-1024</span>
<span class="cell" style="left:206px">Mr Plow</span>
<span class="cell" style="left:448px">Feb 05, 2026</span>
<span class="cell" style="left:608px">Mar 07, 2026</span>
<span class="cell" style="left:767px">$1,284.00</span>
<span class="cell" style="left:965px">$0.00</span>
<span class="cell" style="left:1061px">$1,284.00</span>
<span class="badge">DRAFT</span>
<span class="eyebtn"><svg width="14" height="14" viewBox="0 0 16 16" fill="currentColor" stroke="currentColor" stroke-width=".25"><path d="M16 8s-3-5.5-8-5.5S0 8 0 8s3 5.5 8 5.5S16 8 16 8M1.173 8a13 13 0 0 1 1.66-2.043C4.12 4.668 5.88 3.5 8 3.5s3.879 1.168 5.168 2.457A13 13 0 0 1 14.828 8q-.086.13-.195.288c-.335.48-.83 1.12-1.465 1.755C11.879 11.332 10.119 12.5 8 12.5s-3.879-1.168-5.168-2.457A13 13 0 0 1 1.172 8z"/><path d="M8 5.5a2.5 2.5 0 1 0 0 5 2.5 2.5 0 0 0 0-5M4.5 8a3.5 3.5 0 1 1 7 0 3.5 3.5 0 0 1-7 0"/></svg></span>
</div>
<div class="row" style="top:1012px">
<span class="cell" style="left:8px">INV-1023</span>
<span class="cell" style="left:206px">Mr Plow</span>
<span class="cell" style="left:448px">Feb 05, 2026</span>
<span class="cell" style="left:608px">Mar 07, 2026</span>
<span class="cell" style="left:767px">$282.48</span>
<span class="cell" style="left:965px">$0.00</span>
<span class="cell" style="left:1061px">$282.48</span>
<span class="badge">DRAFT</span>
<span class="eyebtn"><svg width="14" height="14" viewBox="0 0 16 16" fill="currentColor" stroke="currentColor" stroke-width=".25"><path d="M16 8s-3-5.5-8-5.5S0 8 0 8s3 5.5 8 5.5S16 8 16 8M1.173 8a13 13 0 0 1 1.66-2.043C4.12 4.668 5.88 3.5 8 3.5s3.879 1.168 5.168 2.457A13 13 0 0 1 14.828 8q-.086.13-.195.288c-.335.48-.83 1.12-1.465 1.755C11.879 11.332 10.119 12.5 8 12.5s-3.879-1.168-5.168-2.457A13 13 0 0 1 1.172 8z"/><path d="M8 5.5a2.5 2.5 0 1 0 0 5 2.5 2.5 0 0 0 0-5M4.5 8a3.5 3.5 0 1 1 7 0 3.5 3.5 0 0 1-7 0"/></svg></span>
</div>
<div class="row" style="top:1057px">
<span class="cell" style="left:8px">INV-1001</span>
<span class="cell" style="left:206px">Meridian Healthcare Systems</span>
<span class="cell" style="left:448px">Jan 23, 2026</span>
<span class="cell" style="left:608px">Feb 22, 2026</span>
<span class="cell" style="left:767px">$481.50</span>
<span class="cell" style="left:965px">$487.13</span>
<span class="cell" style="left:1061px">$-5.63</span>
<span class="badge paid">PAID</span>
<span class="eyebtn"><svg width="14" height="14" viewBox="0 0 16 16" fill="currentColor" stroke="currentColor" stroke-width=".25"><path d="M16 8s-3-5.5-8-5.5S0 8 0 8s3 5.5 8 5.5S16 8 16 8M1.173 8a13 13 0 0 1 1.66-2.043C4.12 4.668 5.88 3.5 8 3.5s3.879 1.168 5.168 2.457A13 13 0 0 1 14.828 8q-.086.13-.195.288c-.335.48-.83 1.12-1.465 1.755C11.879 11.332 10.119 12.5 8 12.5s-3.879-1.168-5.168-2.457A13 13 0 0 1 1.172 8z"/><path d="M8 5.5a2.5 2.5 0 1 0 0 5 2.5 2.5 0 0 0 0-5M4.5 8a3.5 3.5 0 1 1 7 0 3.5 3.5 0 0 1-7 0"/></svg></span>
</div>

<div class="fab"></div>
<svg class="abs" style="left:1780px;top:1000px" width="60" height="60" viewBox="1780 1000 60 60">
  <path d="M1792.4 1039.5 C1797 1035.5 1803 1035.5 1808.3 1039 C1812 1041.5 1817 1043 1821.5 1041.5 C1825 1040 1826 1034 1821.5 1031 C1818 1029 1812 1028.5 1808.5 1026.5 C1804.5 1025 1804 1020.5 1808 1018.6 C1812 1016.8 1819 1017.3 1824 1021.3" fill="none" stroke="#4f535b" stroke-width="2.2" stroke-dasharray="12 200"/>
  <path d="M1792.4 1039.5 C1797 1035.5 1803 1035.5 1808.3 1039 C1812 1041.5 1817 1043 1821.5 1041.5 C1825 1040 1826 1034 1821.5 1031 C1818 1029 1812 1028.5 1808.5 1026.5 C1804.5 1025 1804 1020.5 1808 1018.6 C1812 1016.8 1819 1017.3 1824 1021.3" fill="none" stroke="#4f535b" stroke-width="4" stroke-dasharray="0 7 6 200"/>
  <path d="M1792.4 1039.5 C1797 1035.5 1803 1035.5 1808.3 1039 C1812 1041.5 1817 1043 1821.5 1041.5 C1825 1040 1826 1034 1821.5 1031 C1818 1029 1812 1028.5 1808.5 1026.5 C1804.5 1025 1804 1020.5 1808 1018.6 C1812 1016.8 1819 1017.3 1824 1021.3" fill="none" stroke="#4f535b" stroke-width="6" stroke-dasharray="0 12 200"/>
  <path d="M1792.4 1039.5 C1797 1035.5 1803 1035.5 1808.3 1039 C1812 1041.5 1817 1043 1821.5 1041.5 C1825 1040 1826 1034 1821.5 1031 C1818 1029 1812 1028.5 1808.5 1026.5 C1804.5 1025 1804 1020.5 1808 1018.6 C1812 1016.8 1819 1017.3 1824 1021.3" fill="none" stroke="#35c9ff" stroke-width="6" stroke-dasharray="0 24 18 11 9 200"/>
  <path d="M1792.4 1039.5 C1797 1035.5 1803 1035.5 1808.3 1039 C1812 1041.5 1817 1043 1821.5 1041.5 C1825 1040 1826 1034 1821.5 1031 C1818 1029 1812 1028.5 1808.5 1026.5 C1804.5 1025 1804 1020.5 1808 1018.6 C1812 1016.8 1819 1017.3 1824 1021.3" fill="none" stroke="#35c9ff" stroke-width="3.6" stroke-dasharray="0 9 5 200"/>
  <path d="M1816 1016.2 Q1822 1016.6 1825 1020.6 L1824.5 1023 Q1820 1022.8 1817 1021.1 Z" fill="#4f535b"/>
  <path d="M1824.5 1022.5 L1828 1024.5" stroke="#35c9ff" stroke-width=".9"/>
  <path d="M1819.5 1018 L1821.5 1019.3" stroke="#35c9ff" stroke-width="1.1"/>
</svg>
</body></html>
